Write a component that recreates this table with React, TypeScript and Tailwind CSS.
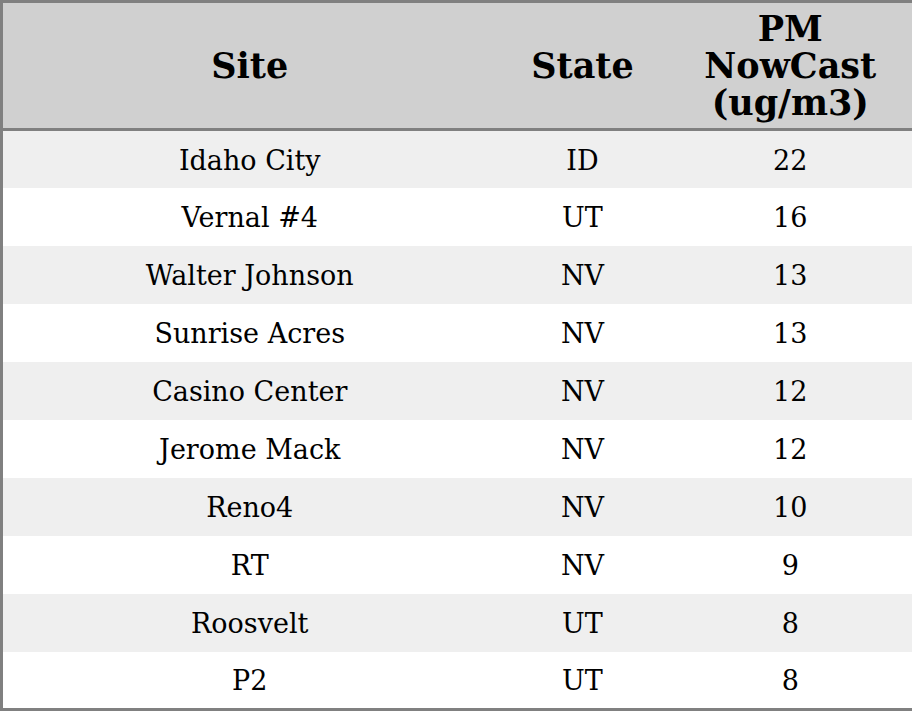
const rows: [string, string, number][] = [
  ['Idaho City', 'ID', 22],
  ['Vernal #4', 'UT', 16],
  ['Walter Johnson', 'NV', 13],
  ['Sunrise Acres', 'NV', 13],
  ['Casino Center', 'NV', 12],
  ['Jerome Mack', 'NV', 12],
  ['Reno4', 'NV', 10],
  ['RT', 'NV', 9],
  ['Roosvelt', 'UT', 8],
  ['P2', 'UT', 8],
];

export default function App() {
  return (
    <div className="w-[912px] h-[711px] bg-white font-['DejaVu_Serif',serif] text-black">
      <table className="w-[912px] border-collapse border-[3px] border-[#808080] table-fixed">
        <colgroup>
          <col className="w-[495px]" />
          <col className="w-[172px]" />
          <col className="w-[245px]" />
        </colgroup>
        <thead>
          <tr className="h-[128px] bg-[#d0d0d0] border-b-[3px] border-[#808080]">
            <th className="text-[35px] leading-[37px] font-bold text-center">Site</th>
            <th className="text-[35px] leading-[37px] font-bold text-center">State</th>
            <th className="text-[35px] leading-[37px] font-bold text-center">
              PM<br />NowCast<br />(ug/m3)
            </th>
          </tr>
        </thead>
        <tbody>
          {rows.map(([site, state, pm], i) => (
            <tr key={site} className={`h-[58px] ${i % 2 === 0 ? 'bg-[#efefef]' : 'bg-white'}`}>
              <td className="pt-[3px] text-[27px] text-center">{site}</td>
              <td className="pt-[3px] text-[27px] text-center">{state}</td>
              <td className="pt-[3px] text-[27px] text-center">{pm}</td>
            </tr>
          ))}
        </tbody>
      </table>
    </div>
  );
}
